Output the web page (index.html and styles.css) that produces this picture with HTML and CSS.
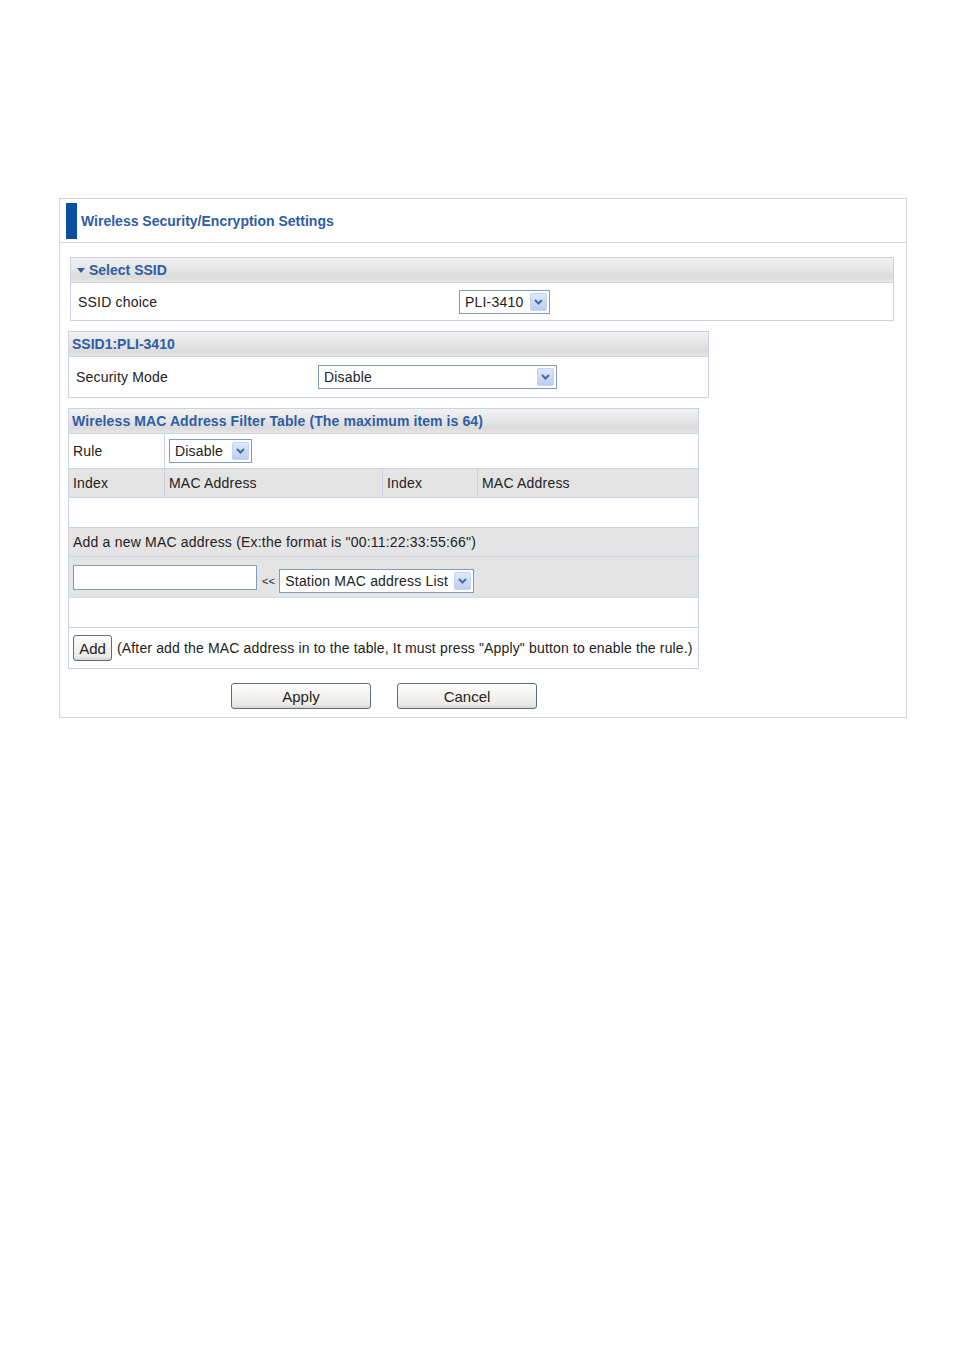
FILE: index.html
```html
<!DOCTYPE html>
<html lang="en">
<head>
  <meta charset="UTF-8" />
  <title>Wireless Security/Encryption Settings</title>
  <link rel="stylesheet" href="styles.css">
</head>
<body>
  <div class="page">
    <div class="panel">
      <div class="panel-title">
        <span class="title-bar"></span>
        <span class="title-text">Wireless Security/Encryption Settings</span>
      </div>

      <div class="section ssid-select">
        <div class="section-head"><span class="caret"></span>Select SSID</div>
        <div class="row">
          <span class="label">SSID choice</span>
          <span class="select sel-ssid"><span class="sel-text">PLI-3410</span><span class="sel-arrow"><svg width="9" height="6" viewBox="0 0 9 6"><path d="M1 1 L4.5 4.5 L8 1" fill="none" stroke="#4a6a9a" stroke-width="2"/></svg></span></span>
        </div>
      </div>

      <div class="section ssid-mode">
        <div class="section-head">SSID1:PLI-3410</div>
        <div class="row">
          <span class="label">Security Mode</span>
          <span class="select sel-mode"><span class="sel-text">Disable</span><span class="sel-arrow"><svg width="9" height="6" viewBox="0 0 9 6"><path d="M1 1 L4.5 4.5 L8 1" fill="none" stroke="#4a6a9a" stroke-width="2"/></svg></span></span>
        </div>
      </div>

      <div class="section mac-table">
        <div class="section-head mac-head">Wireless MAC Address Filter Table (The maximum item is 64)</div>
        <div class="grid-row rule-row">
          <span class="cell c1">Rule</span>
          <span class="cell c-rest">
            <span class="select sel-rule"><span class="sel-text">Disable</span><span class="sel-arrow"><svg width="9" height="6" viewBox="0 0 9 6"><path d="M1 1 L4.5 4.5 L8 1" fill="none" stroke="#4a6a9a" stroke-width="2"/></svg></span></span>
          </span>
        </div>
        <div class="grid-row gray index-row">
          <span class="cell c1">Index</span>
          <span class="cell c2">MAC Address</span>
          <span class="cell c3">Index</span>
          <span class="cell c4">MAC Address</span>
        </div>
        <div class="line empty"></div>
        <div class="line gray add-note">Add a new MAC address (Ex:the format is "00:11:22:33:55:66")</div>
        <div class="line gray add-input">
          <span class="text-input"></span>
          <span class="arrows">&lt;&lt;</span>
          <span class="select sel-station"><span class="sel-text">Station MAC address List</span><span class="sel-arrow"><svg width="9" height="6" viewBox="0 0 9 6"><path d="M1 1 L4.5 4.5 L8 1" fill="none" stroke="#4a6a9a" stroke-width="2"/></svg></span></span>
        </div>
        <div class="line empty"></div>
        <div class="line add-row">
          <span class="btn btn-add">Add</span>
          <span class="hint">(After add the MAC address in to the table, It must press "Apply" button to enable the rule.)</span>
        </div>
      </div>

      <div class="actions">
        <span class="btn btn-wide">Apply</span>
        <span class="btn btn-wide">Cancel</span>
      </div>
    </div>
  </div>
</body>
</html>
```

FILE: styles.css
```css
body {
  margin: 0;
  background-color: #fff;
  color: #222;
  font-family: "Liberation Sans", Arial, sans-serif;
  font-size: 14px;
  letter-spacing: 0.2px;
}

.page {
  padding: 198px 0 0 59px;
}

.panel {
  width: 846px;
  border: 1px solid #d4d4d4;
  padding-bottom: 8px;
}

.panel-title {
  display: flex;
  align-items: center;
  height: 43px;
  border-bottom: 1px solid #d8d8d8;
  padding-left: 6px;
}

.title-bar {
  width: 11px;
  height: 36px;
  background-color: #0b4fa0;
  margin-right: 4px;
}

.title-text {
  color: #2d5da6;
  font-weight: bold;
  font-size: 14px;
  letter-spacing: 0;
}

.section {
  border: 1px solid #c9d2de;
}

.ssid-select {
  margin: 14px 0 0 10px;
  width: 822px;
}

.ssid-mode {
  margin: 10px 0 0 8px;
  width: 639px;
}

.mac-table {
  margin: 10px 0 0 8px;
  width: 629px;
}

.section-head {
  height: 24px;
  line-height: 24px;
  padding-left: 3px;
  background: linear-gradient(#f2f2f2, #dcdcdc 80%, #e6e6e6);
  border-bottom: 1px solid #cfd6e0;
  color: #2d5da6;
  font-weight: bold;
  font-size: 14px;
  letter-spacing: 0;
}

.mac-head {
  letter-spacing: 0.1px;
}

.caret {
  display: inline-block;
  width: 0;
  height: 0;
  border-left: 4px solid transparent;
  border-right: 4px solid transparent;
  border-top: 5px solid #2d5da6;
  margin: 0 4px 2px 3px;
  vertical-align: middle;
}

.row {
  display: flex;
  align-items: center;
  height: 37px;
  padding-left: 7px;
}

.ssid-select .label {
  width: 381px;
}

.ssid-mode .row {
  height: 40px;
}

.ssid-mode .label {
  width: 242px;
}

.select {
  display: inline-flex;
  align-items: center;
  justify-content: space-between;
  height: 22px;
  border: 1px solid #7f9db9;
  background-color: #fff;
  box-sizing: content-box;
}

.sel-text {
  padding-left: 5px;
}

.sel-arrow {
  display: flex;
  align-items: center;
  justify-content: center;
  width: 17px;
  height: 18px;
  margin-right: 2px;
  background: linear-gradient(#dfe8fb, #bccdf3);
  border: 1px solid #c3d3f5;
  border-radius: 2px;
  box-sizing: border-box;
}

.sel-ssid { width: 89px; }
.sel-mode { width: 237px; }
.sel-rule { width: 81px; }
.sel-station { width: 193px; }

.grid-row {
  display: flex;
  border-bottom: 1px solid #c9d2de;
}

.cell {
  display: flex;
  align-items: center;
  padding-left: 4px;
  box-sizing: border-box;
}

.c1 {
  width: 96px;
  border-right: 1px solid #c9d2de;
}

.c2 {
  width: 218px;
  border-right: 1px solid #c9d2de;
}

.c3 {
  width: 95px;
  border-right: 1px solid #c9d2de;
}

.c4 {
  flex: 1;
}

.rule-row {
  height: 34px;
}

.rule-row .c-rest {
  padding-left: 4px;
}

.index-row {
  height: 28px;
}

.gray {
  background-color: #e4e4e4;
}

.line {
  display: flex;
  align-items: center;
  padding-left: 4px;
  border-bottom: 1px solid #c9d2de;
}

.empty {
  height: 29px;
  background-color: #fff;
}

.add-note {
  height: 28px;
}

.add-input {
  height: 40px;
  border-bottom-color: #d4dbe4;
}

.text-input {
  width: 182px;
  height: 23px;
  border: 1px solid #7f9db9;
  background-color: #fff;
}

.arrows {
  font-size: 11px;
  margin: 7px 4px 0 5px;
}

.sel-station {
  margin-top: 7px;
}

.add-row {
  height: 40px;
  border-bottom: none;
}

.btn {
  display: inline-flex;
  align-items: center;
  justify-content: center;
  border: 1px solid #5a6d82;
  border-radius: 3px;
  background: linear-gradient(#fdfdfd, #ecebe6 85%, #d6d5ce);
  color: #222;
  letter-spacing: 0;
}

.btn-add {
  width: 37px;
  height: 24px;
  margin-right: 5px;
  font-size: 15px;
}

.hint {
  font-size: 14px;
  letter-spacing: 0.15px;
}

.actions {
  display: flex;
  gap: 26px;
  padding: 14px 0 0 171px;
}

.btn-wide {
  width: 138px;
  height: 24px;
  font-size: 15px;
}
```
